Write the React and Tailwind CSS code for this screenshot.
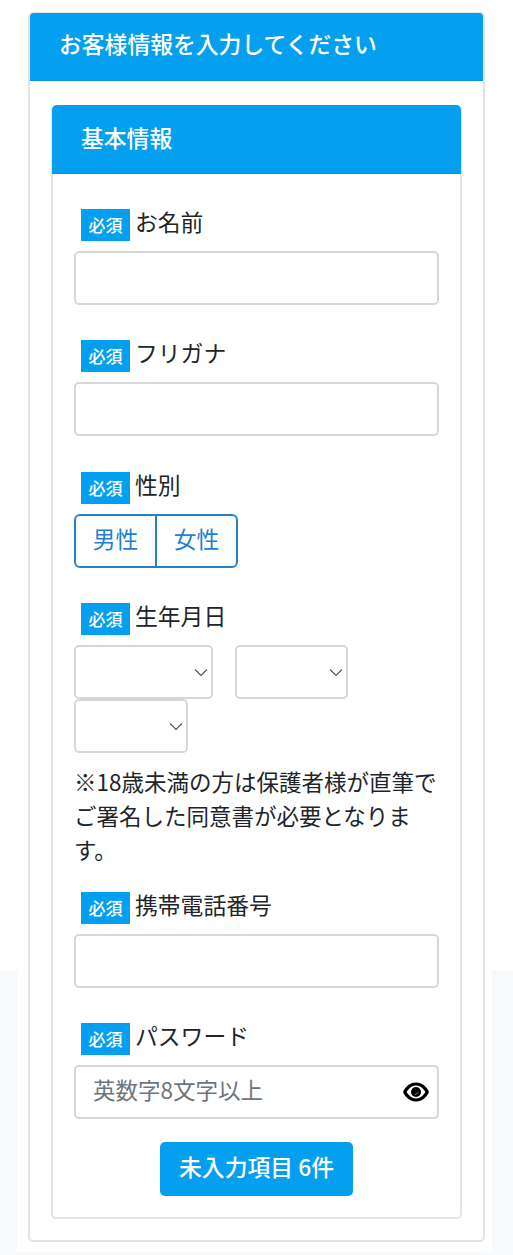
import React from 'react';

const font = { fontFamily: '"Noto Sans CJK JP", "Noto Sans", sans-serif' };

const FieldLabel = ({ children }) => (
  <div className="flex items-center h-[32px] pl-[7px] mb-[10px]">
    <span className="w-[49px] h-[32px] flex items-center justify-center bg-[#059ff0] text-white text-[17px] font-medium">
      必須
    </span>
    <span className="ml-[5px] text-[22.8px] leading-[32px] text-[#212529] -mt-[6px]">{children}</span>
  </div>
);

const TextBox = () => (
  <div className="h-[54px] rounded-[5px] border-2 border-[#d3d8dc] bg-white" />
);

const SelectBox = ({ className }) => (
  <div className={`h-[54px] rounded-[5px] border-2 border-[#d3d8dc] bg-white flex items-center justify-end ${className}`}>
    <svg width="14" height="9" viewBox="0 0 14 9" fill="none" className="mr-[3px] mt-px">
      <path d="M1 1.5 L7 7.5 L13 1.5" stroke="#555" strokeWidth="1.2" />
    </svg>
  </div>
);

const App = () => (
  <div
    className="h-[1255px] bg-[linear-gradient(to_bottom,#fff_970px,#f8f9fa_970px)] pl-[17px] pr-[21px] pb-[3px] overflow-hidden"
    style={font}
  >
    <div className="h-[1252px] bg-white pl-[11px] pr-[7px] pt-[12px]">
      <div className="h-[1230px] rounded-[5px] border-2 border-[#e2e5e8] bg-white">
        <div className="h-[68px] -mt-px rounded-t-[4px] bg-[#059ff0] border-b border-[#0b8fd6] pl-[29px] pb-[4px] flex items-center text-white text-[22.8px] font-medium">
          お客様情報を入力してください
        </div>
        <div className="mx-[21px] mt-[24px] h-[1114px] rounded-[5px] border-2 border-[#e2e5e8]">
          <div className="h-[69px] -mt-[2px] -mx-[1px] rounded-t-[5px] bg-[#059ff0] border-b border-[#0b8fd6] pl-[29px] pb-[2px] flex items-center text-white text-[22.8px] font-medium">
            基本情報
          </div>
          <div className="px-[21px] pt-[35px]">
            <FieldLabel>お名前</FieldLabel>
            <TextBox />

            <div className="mt-[35px]">
              <FieldLabel>フリガナ</FieldLabel>
              <TextBox />
            </div>

            <div className="mt-[36px]">
              <FieldLabel>性別</FieldLabel>
              <div className="w-[164px] h-[54px] flex rounded-[6px] border-2 border-[#2a80c8] text-[#1f7fd0] text-[22.8px]">
                <div className="flex-1 flex items-center justify-center pb-[4px] border-r-2 border-[#2a80c8]">男性</div>
                <div className="flex-1 flex items-center justify-center pb-[4px]">女性</div>
              </div>
            </div>

            <div className="mt-[35px]">
              <FieldLabel>生年月日</FieldLabel>
              <div className="flex flex-wrap">
                <SelectBox className="w-[139px]" />
                <SelectBox className="w-[113px] ml-[22px]" />
                <SelectBox className="w-[114px]" />
              </div>
            </div>

            <p className="mt-[11px] text-[22.5px] leading-[34px] text-[#212529]">
              ※18歳未満の方は保護者様が直筆でご署名した同意書が必要となります。
            </p>

            <div className="mt-[26px]">
              <FieldLabel>携帯電話番号</FieldLabel>
              <TextBox />
            </div>

            <div className="mt-[35px]">
              <FieldLabel>パスワード</FieldLabel>
              <div className="h-[54px] rounded-[5px] border-2 border-[#d3d8dc] bg-white flex items-center justify-between pl-[17px] pr-[8px]">
                <span className="text-[22.5px] text-[#6c757d] pb-[4px]">英数字8文字以上</span>
                <svg width="26" height="20" viewBox="0 0 26 20">
                  <path d="M13 0.5 C6.5 0.5 2 5.5 0 10 C2 14.5 6.5 19.5 13 19.5 C19.5 19.5 24 14.5 26 10 C24 5.5 19.5 0.5 13 0.5 Z" fill="#000" />
                  <path d="M13 3.5 C8.8 3.5 5.5 6.8 3.6 10 C5.5 13.2 8.8 16.5 13 16.5 C17.2 16.5 20.5 13.2 22.4 10 C20.5 6.8 17.2 3.5 13 3.5 Z" fill="#fff" />
                  <circle cx="13" cy="10" r="5" fill="#000" />
                  <path d="M11 12 A3 3 0 0 0 15.5 9.5 A4 4 0 0 1 11 12 Z" fill="#fff" />
                </svg>
              </div>
            </div>

            <div className="mt-[23px] flex justify-center">
              <div className="w-[193px] h-[54px] rounded-[5px] bg-[#059ff0] flex items-center justify-center pb-[4px] text-white text-[22.8px] font-medium">
                未入力項目 6件
              </div>
            </div>
          </div>
        </div>
      </div>
    </div>
  </div>
);

export default App;
